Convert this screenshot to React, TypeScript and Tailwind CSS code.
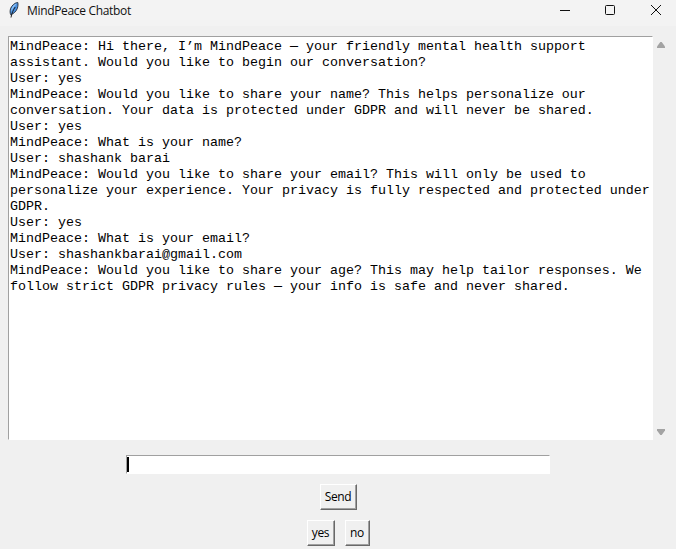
import type { ReactNode } from "react";

const lines: string[] = [
  "MindPeace: Hi there, I’m MindPeace — your friendly mental health support",
  "assistant. Would you like to begin our conversation?",
  "User: yes",
  "MindPeace: Would you like to share your name? This helps personalize our",
  "conversation. Your data is protected under GDPR and will never be shared.",
  "User: yes",
  "MindPeace: What is your name?",
  "User: shashank barai",
  "MindPeace: Would you like to share your email? This will only be used to",
  "personalize your experience. Your privacy is fully respected and protected under",
  "GDPR.",
  "User: yes",
  "MindPeace: What is your email?",
  "User: shashankbarai@gmail.com",
  "MindPeace: Would you like to share your age? This may help tailor responses. We",
  "follow strict GDPR privacy rules — your info is safe and never shared.",
];

function Feather() {
  return (
    <svg width="10" height="16" viewBox="0 0 10 16" className="ml-[9px] mt-[2px] shrink-0">
      <path d="M8.8.5C5.800.7 2.600 3.500 1.500 6.800.9 9 1 11 1.700 12.700 4.500 11.800 7.400 9.400 8.400 6.200 9 4.200 9.200 2.200 8.800.5z" fill="#4a90e0" stroke="#222c3a" strokeWidth="0.9" />
      <path d="M7.800 1.500C5.300 2.300 3.200 4.500 2.400 7l-.3 2.500C3.800 6.500 5.800 3.800 7.800 1.500z" fill="#8fc4f8" />
      <path d="M6.200 5C4.200 8 2.800 11 2 15.500" fill="none" stroke="#111" strokeWidth="0.9" />
    </svg>
  );
}

function TitleBar() {
  return (
    <header className="flex h-[26px] items-start bg-[#f3f3f3]">
      <Feather />
      <h1 className="ml-[8px] mt-[2px] flex-1 font-['Open_Sans',sans-serif] text-[12px] font-normal leading-[18px] tracking-[-0.33px] text-[#111]">
        MindPeace Chatbot
      </h1>
      <svg width="116" height="20" viewBox="0 0 116 20" fill="none" stroke="#111" strokeWidth="1" className="shrink-0">
        <path d="M0 10.5h10" />
        <rect x="45.5" y="5.5" width="9" height="9" rx="1" />
        <path d="m91 5 10 10m0-10L91 15" />
      </svg>
    </header>
  );
}

function Button({ children, className }: { children: ReactNode; className: string }) {
  return (
    <button
      className={`flex h-[26px] items-center justify-center border border-b-[#696969] border-l-white border-r-[#696969] border-t-white bg-[#f0f0f0] pr-px font-['Open_Sans',sans-serif] text-[12px] leading-4 text-black shadow-[inset_-1px_-1px_0_#a0a0a0] ${className}`}
    >
      {children}
    </button>
  );
}

export default function App() {
  return (
    <div className="flex h-[549px] w-[676px] flex-col overflow-hidden bg-[#f0f0f0]">
      <TitleBar />
      <main className="flex flex-col pt-[10px]">
        <div className="flex h-[404px] pl-2">
          <div className="w-[645px] border border-b-white border-l-[#a0a0a0] border-r-white border-t-[#a0a0a0] bg-white pl-px pt-[2px]">
            {lines.map((line, i) => (
              <p
                key={i}
                className="h-4 whitespace-pre font-['Liberation_Mono',monospace] text-[13.333px] leading-4 text-black"
              >
                {line}
              </p>
            ))}
          </div>
          <div className="flex w-4 flex-col items-center justify-between pb-[5px] pt-[6px]">
            <svg width="8" height="6" viewBox="0 0 8 6" fill="#a3a3a3">
              <path d="M3.3 0h1.4L8 4.500V6H0V4.500z" />
            </svg>
            <svg width="8" height="6" viewBox="0 0 8 6" fill="#a3a3a3">
              <path d="M0 0h8v1.500L4.700 6H3.300L0 1.500z" />
            </svg>
          </div>
        </div>
        <div className="ml-[126px] mt-[15px] flex h-[19px] w-[424px] border border-b-white border-l-[#a0a0a0] border-r-white border-t-[#a0a0a0] bg-white pt-px">
          <span className="h-[15px] w-[2px] bg-black" />
        </div>
        <Button className="ml-[320px] mt-[10px] w-[37px] tracking-[-0.4px]">Send</Button>
        <div className="ml-[307px] mt-[10px] flex gap-[10px]">
          <Button className="w-7 tracking-[-0.3px]">yes</Button>
          <Button className="w-[25px] tracking-[-0.2px]">no</Button>
        </div>
      </main>
    </div>
  );
}
